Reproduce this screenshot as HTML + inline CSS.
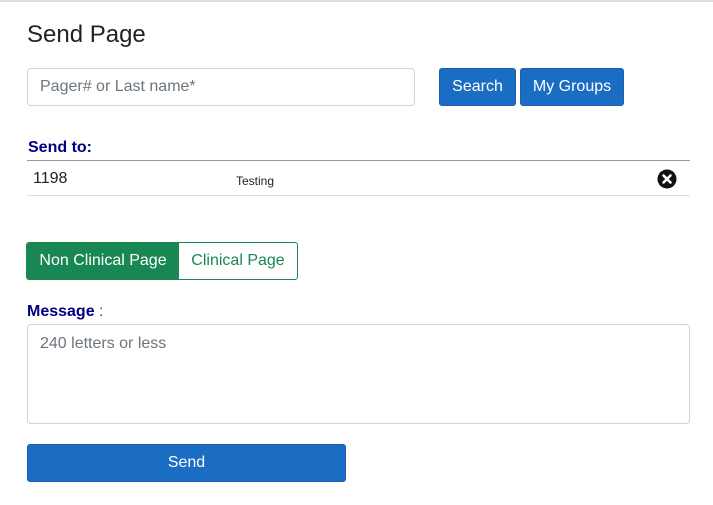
<!DOCTYPE html>
<html><head><style>
*{box-sizing:border-box;margin:0;padding:0}
body{width:713px;height:505px;background:#fff;font-family:"Liberation Sans",sans-serif;position:relative;overflow:hidden}
.a{position:absolute}
h1{position:absolute;left:27px;top:21px;font-size:24px;font-weight:400;color:#222}
.inp{left:27px;top:68px;width:388px;height:38px;border:1px solid #ced4da;border-radius:4px;color:#6c757d;font-size:16px;padding:9px 12px}
.btn{background:#1a6dc2;color:#fff;font-size:16px;border-radius:3px;text-align:center;line-height:36px;height:38px;border:1px solid #1761ad}
.lbl{color:#000080;font-weight:bold;font-size:16px}
</style></head><body>
<div class="a" style="left:0;top:0;width:713px;height:2px;background:#dcdcdc"></div>
<h1>Send Page</h1>
<div class="a inp">Pager# or Last name*</div>
<div class="a btn" style="left:439px;top:68px;width:77px">Search</div>
<div class="a btn" style="left:520px;top:68px;width:104px">My Groups</div>
<div class="a lbl" style="left:28px;top:139px">Send to:</div>
<div class="a" style="left:27px;top:160px;width:663px;border-top:1px solid #999"></div>
<div class="a" style="left:33px;top:170px;font-size:16px;color:#222">1198</div>
<div class="a" style="left:236px;top:174px;font-size:12px;color:#222">Testing</div>
<svg class="a" style="left:657px;top:169px" width="20" height="20" viewBox="0 0 20 20"><circle cx="10" cy="10" r="9.5" fill="#111"/><path d="M6.5 6.5L13.5 13.5M13.5 6.5L6.5 13.5" stroke="#fff" stroke-width="2.6" stroke-linecap="round"/></svg>
<div class="a" style="left:27px;top:195px;width:663px;border-top:1px solid #ddd"></div>
<div class="a" style="left:26px;top:242px;width:272px;height:38px;border:1px solid #198754;border-radius:3px;overflow:hidden;font-size:16px;line-height:36px">
<div class="a" style="left:0;top:0;width:152px;height:36px;background:#198754;color:#fff;text-align:center">Non Clinical Page</div>
<div class="a" style="left:152px;top:0;width:118px;height:36px;color:#198754;text-align:center">Clinical Page</div></div>
<div class="a" style="left:27px;top:303px;font-size:16px"><span class="lbl">Message</span> <span style="color:#555">:</span></div>
<div class="a" style="left:27px;top:324px;width:663px;height:100px;border:1px solid #ced4da;border-radius:4px;color:#6c757d;font-size:16px;padding:10px 12px">240 letters or less</div>
<div class="a btn" style="left:27px;top:444px;width:319px;height:38px">Send</div>
</body></html>
